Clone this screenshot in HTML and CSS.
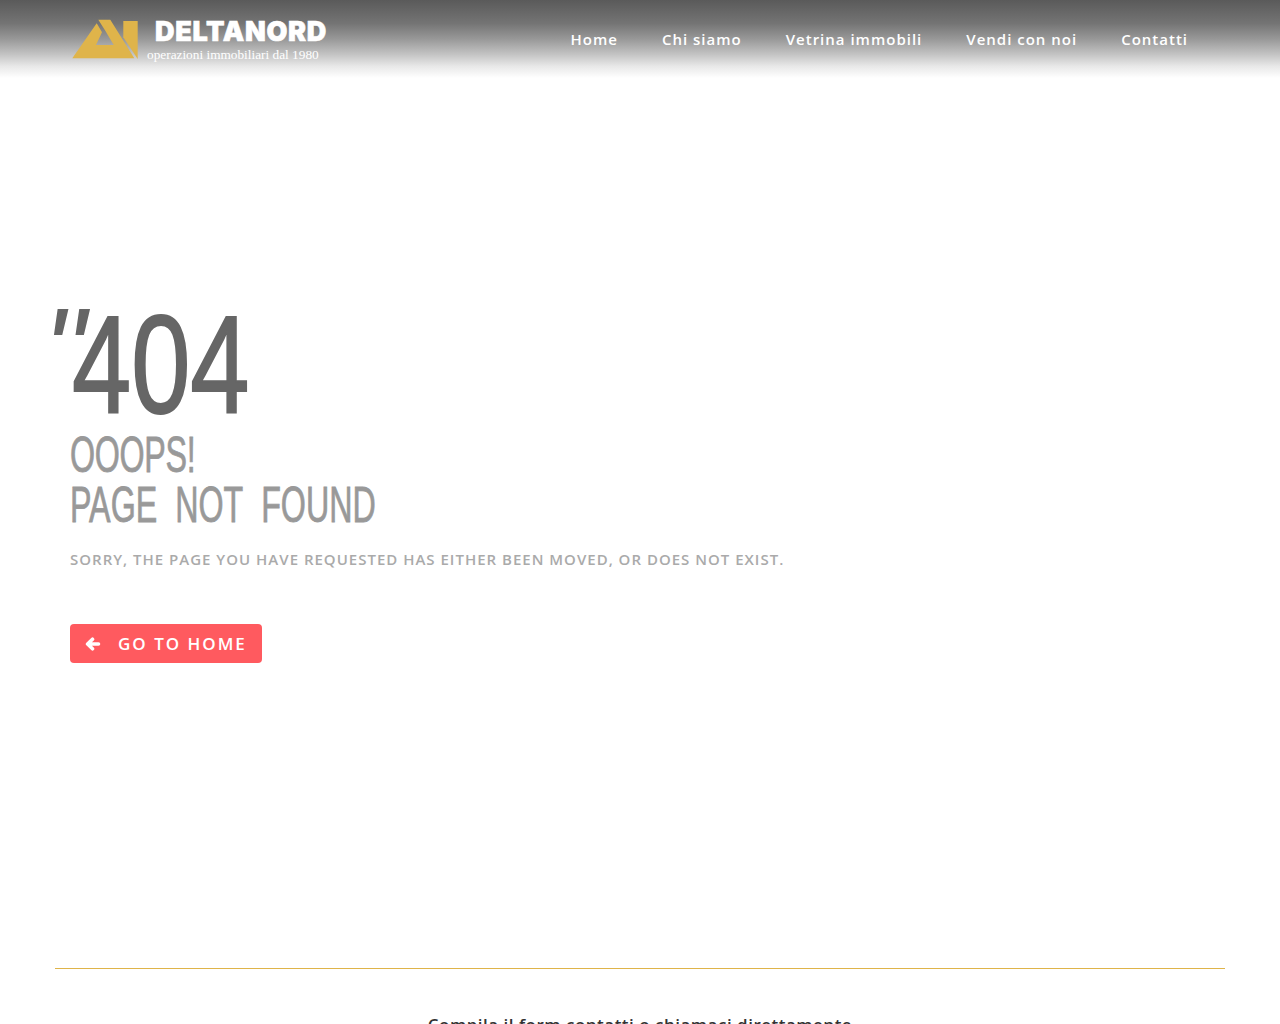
FILE: index.html
```html
<!DOCTYPE html>
<html lang="en">
<head>
  <meta charset="UTF-8" />
  <title>Deltanord - Page not found</title>
  <link rel="stylesheet" href="styles.css">
</head>
<body>
  <header class="top">
    <a class="logo" href="#">
      <svg class="logo-mark" width="68" height="42" viewBox="0 0 68 42">
        <path fill="#dfb44a" d="M28.3 1.7H40.3L64.3 40.3H2.3L26.7 5.3 32 14.3 26 27H43.7L35.3 12.7Z"/>
        <path fill="#dfb44a" d="M53.3 3H67.7V41L53.3 19.3Z"/>
      </svg>
      <span class="logo-text">
        <span class="logo-name">DELTANORD</span>
        <span class="logo-sub">operazioni immobiliari dal 1980</span>
      </span>
    </a>
    <nav class="menu">
      <a href="#">Home</a>
      <a href="#">Chi siamo</a>
      <a href="#">Vetrina immobili</a>
      <a href="#">Vendi con noi</a>
      <a href="#">Contatti</a>
    </nav>
  </header>

  <main class="error">
    <div class="code-wrap">
      <span class="quote">"</span>
      <h1 class="code">404</h1>
    </div>
    <h2 class="title">
      <span class="title-line title-short">OOOPS!</span>
      <span class="title-line">PAGE&nbsp; NOT&nbsp; FOUND</span>
    </h2>
    <p class="sorry">SORRY, THE PAGE YOU HAVE REQUESTED HAS EITHER BEEN MOVED, OR DOES NOT EXIST.</p>
    <a class="home-btn" href="#">
      <svg width="16" height="14" viewBox="0 0 16 14"><path fill="none" stroke="#fff" stroke-width="3.6" stroke-linejoin="round" stroke-linecap="round" d="M7.5 2.2 2.6 7 7.5 11.8M4 7H13.5"/></svg>
      GO TO HOME
    </a>
  </main>

  <footer class="bottom">
    <p>Compila il form contatti o chiamaci direttamente</p>
  </footer>
</body>
</html>
```

FILE: styles.css
```css
* {
  box-sizing: border-box;
}

html,
body {
  height: 1024px;
  overflow: hidden;
}

body {
  margin: 0;
  background: #fff;
  font-family: "Open Sans", sans-serif;
}

a {
  text-decoration: none;
}

.top {
  height: 78px;
  padding: 0 70px;
  display: flex;
  justify-content: space-between;
  align-items: flex-start;
  background: linear-gradient(to bottom, #5a5a5a 0%, #747474 30%, #989898 50%, #c4c4c4 70%, #e8e8e8 85%, #fff 100%);
}

.logo {
  display: flex;
  margin-top: 18px;
  color: #fff;
}

.logo-mark {
  display: block;
}

.logo-text {
  display: flex;
  flex-direction: column;
  margin-left: 9px;
}

.logo-name {
  margin-left: 8px;
  font-family: "Inter", sans-serif;
  font-size: 27px;
  font-weight: 900;
  line-height: 27px;
  letter-spacing: 0.7px;
  -webkit-text-stroke: 0.6px #fff;
}

.logo-sub {
  margin-top: 3px;
  font-family: "Liberation Serif", serif;
  font-size: 13.3px;
  line-height: 14px;
  color: #fff;
}

.menu {
  display: flex;
  gap: 44px;
  margin-top: 29px;
  margin-right: 22px;
}

.menu a {
  color: #fff;
  font-size: 15px;
  font-weight: 600;
  line-height: 20px;
  letter-spacing: 1px;
}

.error {
  height: 890px;
  padding: 222px 70px 0;
}

.code-wrap {
  position: relative;
  height: 130px;
}

.quote {
  position: absolute;
  left: -27px;
  top: -10px;
  font-family: "Liberation Sans", sans-serif;
  font-size: 120px;
  line-height: 120px;
  font-style: italic;
  color: #666;
}

.code {
  display: inline-block;
  margin: 0 0 0 2px;
  font-family: "Liberation Sans", sans-serif;
  font-size: 140px;
  font-weight: 400;
  line-height: 130px;
  color: #666;
  -webkit-text-stroke: 2px #666;
  transform: scaleX(0.76);
  transform-origin: 0 0;
}

.title {
  margin: 0;
  font-family: "Liberation Sans", sans-serif;
  font-size: 50px;
  font-weight: 400;
  line-height: 50px;
  color: #999;
  -webkit-text-stroke: 0.8px #999;
}

.title-line {
  display: block;
  width: max-content;
  transform: scaleX(0.645);
  transform-origin: 0 0;
}

.title-short {
  letter-spacing: -0.5px;
}

.sorry {
  margin: 19px 0 0;
  font-size: 15px;
  font-weight: 600;
  line-height: 20px;
  letter-spacing: 1px;
  color: #aaa;
}

.home-btn {
  display: inline-flex;
  align-items: center;
  gap: 17px;
  height: 39px;
  margin-top: 55px;
  padding: 0 15px;
  border-radius: 4px;
  background: #ff5a5f;
  color: #fff;
  font-size: 17px;
  font-weight: 600;
  letter-spacing: 2px;
}

.bottom {
  margin: 0 55px;
  border-top: 1px solid #dfb44a;
  text-align: center;
}

.bottom p {
  margin: 44px 0 0;
  font-size: 17px;
  font-weight: 600;
  line-height: 23px;
  letter-spacing: 0.5px;
  color: #333;
}
```
